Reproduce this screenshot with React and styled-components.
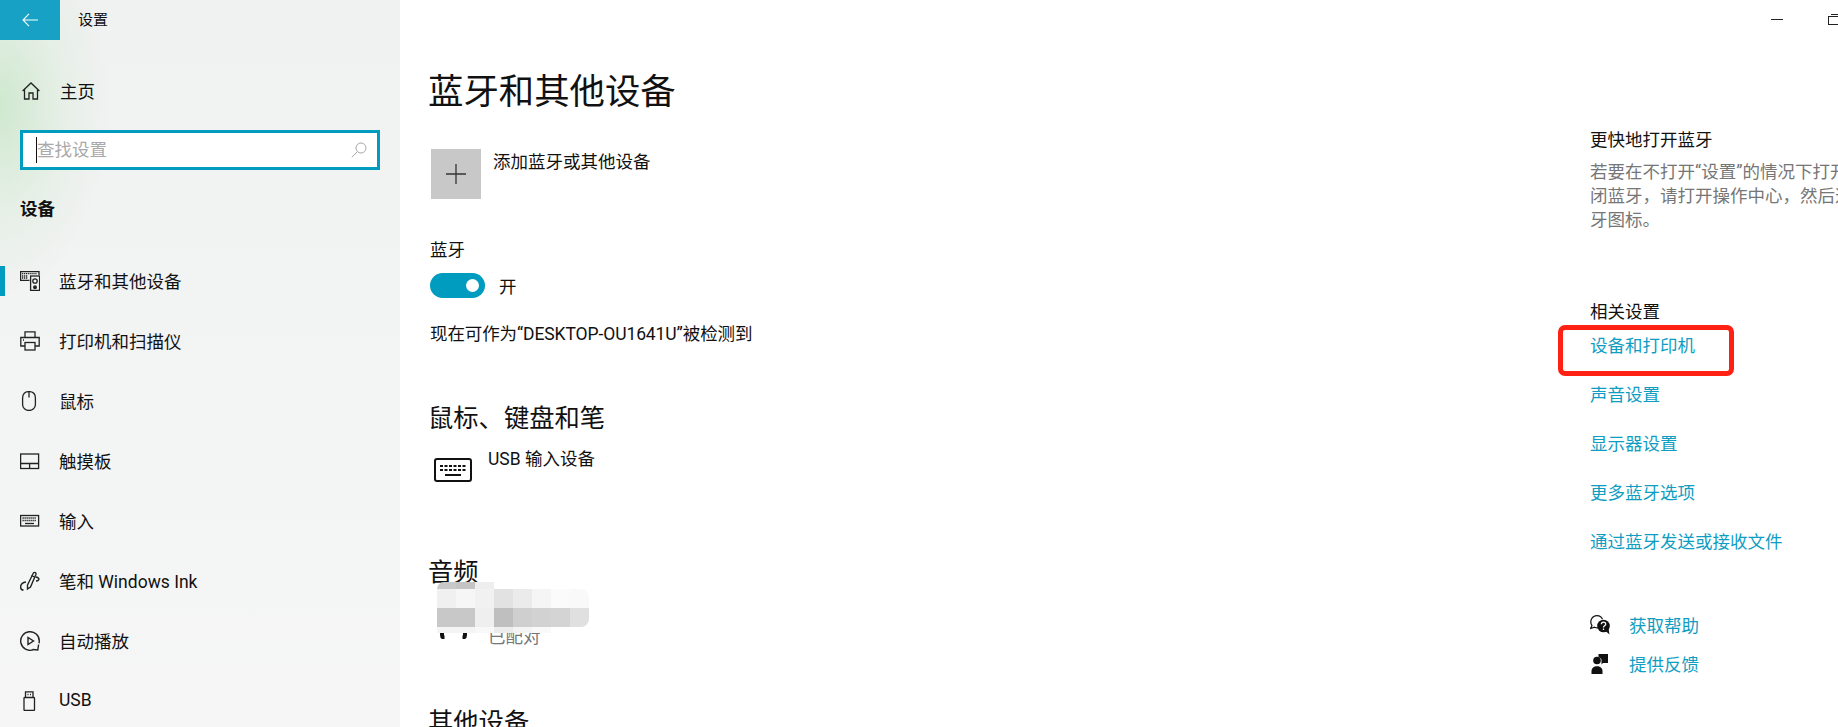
import React from "react";
import styled, { createGlobalStyle } from "styled-components";

const FONT = `Roboto, "Noto Sans CJK SC", sans-serif`;
const BLUE = "#009cc0";
const LINK = "#0f9dc2";

const GlobalStyle = createGlobalStyle`
  html, body {
    margin: 0;
    padding: 0;
    background: #fff;
    overflow: hidden;
  }
  body {
    font-family: ${FONT};
    font-size: 17.5px;
    color: #111;
  }
`;

const Window = styled.div`
  position: relative;
  display: flex;
  width: 1838px;
  height: 727px;
  overflow: hidden;
  background: #fff;
`;

const Sidebar = styled.nav`
  flex: 0 0 400px;
  display: flex;
  flex-direction: column;
  background:
    radial-gradient(ellipse 110px 190px at 0px 105px, #cfe8cf 0%, rgba(225, 238, 225, 0.7) 55%, rgba(242, 243, 243, 0) 100%),
    linear-gradient(180deg, #f0f1f1 0%, #f3f4f4 60%, #f6f6f6 100%);

  > * {
    flex-shrink: 0;
  }
`;

const TitleBar = styled.div`
  display: flex;
  align-items: center;
  height: 40px;
  font-size: 15px;
  line-height: 38px;
`;

const BackButton = styled.div`
  display: flex;
  align-items: center;
  justify-content: center;
  width: 60px;
  height: 40px;
  margin-right: 18px;
  background: #17a2c5;
`;

const HomeRow = styled.div`
  display: flex;
  align-items: center;
  height: 60px;
  margin-top: 21px;
  padding-left: 22px;
`;

const HomeLabel = styled.span`
  margin: -2px 0 0 20px;
`;

const SearchBox = styled.div`
  display: flex;
  align-items: center;
  justify-content: space-between;
  box-sizing: border-box;
  width: 360px;
  height: 40px;
  margin: 9px 0 0 20px;
  padding: 0 10px 0 13px;
  background: #fff;
  border: 3px solid ${BLUE};
  color: #a9a9a9;
`;

const Placeholder = styled.span`
  border-left: 1px solid #111;
  line-height: 26px;
`;

const GroupTitle = styled.div`
  height: 24px;
  line-height: 24px;
  margin: 27px 0 0 20px;
  font-weight: 700;
`;

const Menu = styled.div`
  display: flex;
  flex-direction: column;
  margin-top: 30px;
`;

const MenuRow = styled.div`
  display: flex;
  align-items: center;
  flex-shrink: 0;
  height: 60px;
  padding-left: 20px;
  position: relative;
`;

const ActiveBar = styled.span`
  position: absolute;
  left: 0;
  top: 15px;
  width: 5px;
  height: 30px;
  background: ${BLUE};
`;

const MenuIcon = styled.span`
  display: flex;
  align-items: center;
  justify-content: flex-start;
  width: 39px;
  height: 24px;
`;

const MenuLabel = styled.span`
  margin-top: -2px;
`;

const Content = styled.main`
  flex: 1;
  display: flex;
  flex-direction: column;
  padding-left: 30px;
  min-width: 0;

  > * {
    flex-shrink: 0;
  }
`;

const PageTitle = styled.h1`
  margin: 66px 0 0 -2px;
  font-size: 35.4px;
  font-weight: 400;
  line-height: 52px;
`;

const AddRow = styled.div`
  display: flex;
  align-items: flex-start;
  margin: 31px 0 0 1px;
`;

const AddTile = styled.div`
  display: flex;
  align-items: center;
  justify-content: center;
  width: 50px;
  height: 50px;
  margin-right: 12px;
  background: #c8c8c8;
`;

const AddLabel = styled.span`
  line-height: 27px;
`;

const FieldLabel = styled.div`
  margin-top: 37px;
  line-height: 28px;
`;

const ToggleRow = styled.div`
  display: flex;
  align-items: center;
  margin-top: 9px;
  height: 25px;
`;

const ToggleTrack = styled.span`
  display: flex;
  align-items: center;
  justify-content: flex-end;
  box-sizing: border-box;
  width: 55px;
  height: 25px;
  padding-right: 6px;
  border-radius: 13px;
  background: ${BLUE};
  margin-right: 14px;
`;

const ToggleThumb = styled.span`
  width: 13px;
  height: 13px;
  border-radius: 50%;
  background: #fff;
`;

const StatusLine = styled.div`
  margin-top: 22px;
  line-height: 28px;
  letter-spacing: -0.1px;
`;

const SectionTitle = styled.h2`
  margin: ${(p) => p.$top}px 0 0 -2px;
  font-size: 25.3px;
  font-weight: 400;
  line-height: 38px;
`;

const DeviceRow = styled.div`
  position: relative;
  display: flex;
  align-items: flex-start;
  margin: 6px 0 0 4px;
  height: ${(p) => p.$height}px;
`;

const DeviceIcon = styled.span`
  display: flex;
  width: 54px;
  padding-top: 14px;
`;

const DeviceName = styled.span`
  margin-top: 2px;
  line-height: 26px;
`;

const DeviceState = styled.span`
  color: #777;
  margin-top: 26px;
  line-height: 26px;
`;

const Mosaic = styled.div`
  position: absolute;
  left: 3px;
  top: -16px;
  display: grid;
  grid-template-columns: repeat(8, 19px);
  grid-template-rows: 7px 19px 19px 6px;
`;

const MosaicCell = styled.span`
  background: ${(p) => p.$c};
  border-radius: ${(p) => p.$r || 0};
`;

const Aside = styled.aside`
  flex: 0 0 248px;
  display: flex;
  flex-direction: column;
  overflow: hidden;
`;

const AsideTitle = styled.div`
  margin-top: ${(p) => p.$top}px;
  line-height: 28px;
`;

const Para = styled.p`
  width: 300px;
  margin: 6px 0 0;
  line-height: 24px;
  color: #767676;
`;

const LinkList = styled.div`
  display: flex;
  flex-direction: column;
  gap: 21px;
  margin-top: 6px;
`;

const Link = styled.a`
  color: ${LINK};
  line-height: 28px;
`;

const HelpRow = styled.div`
  display: flex;
  align-items: center;
  height: 28px;
  margin-top: ${(p) => p.$top}px;
`;

const HelpIcon = styled.span`
  display: flex;
  width: 39px;
  margin-top: ${(p) => p.$lift}px;
`;

const Controls = styled.div`
  position: absolute;
  top: 0;
  right: 0;
  display: flex;
  align-items: flex-start;
`;

const Minimize = styled.span`
  width: 12px;
  height: 1px;
  margin: 19px 45px 0 0;
  background: #222;
`;

const Restore = styled.span`
  position: relative;
  box-sizing: border-box;
  width: 10px;
  height: 9px;
  margin-top: 16px;
  border: 1px solid #222;
  border-right: none;

  &::before {
    content: "";
    position: absolute;
    left: 2px;
    top: -3px;
    width: 8px;
    height: 1px;
    background: #222;
  }
`;

const Highlight = styled.div`
  position: absolute;
  left: 1558px;
  top: 325px;
  box-sizing: border-box;
  width: 176px;
  height: 51px;
  border: 5px solid #ff2113;
  border-radius: 7px;
`;

const Stroke = ({ children, width = 1.3, color = "#222" }) => (
  <svg width={20} height={20} viewBox="0 0 20 20" fill="none" stroke={color} strokeWidth={width}>
    {children}
  </svg>
);

const icons = {
  devices: (
    <Stroke>
      <path d="M19 4V.6H.6v8.800H9.500" />
      <path d="M2 2.600h15M2 5h6M2 7h6" strokeDasharray="1.200 .7" />
      <rect x="10.600" y="5" width="9" height="14.400" />
      <circle cx="15" cy="10" r="2.200" />
      <circle cx="15" cy="16.200" r="1.300" fill="#222" />
    </Stroke>
  ),
  printer: (
    <Stroke>
      <path d="M5 6.500V.8h10v5.700" />
      <path d="M5 15H.8V6.500h18.400V15H15" />
      <rect x="5" y="11.500" width="10" height="7.500" />
      <path d="M3 9h1" />
    </Stroke>
  ),
  mouse: (
    <Stroke>
      <path d="M2.600 7c0-4 2.400-6.400 6.400-6.400S15.400 3 15.400 7v6.500c0 3.500-2.800 6-6.400 6s-6.400-2.500-6.400-6z" />
      <path d="M9 .6v6" />
    </Stroke>
  ),
  pad: (
    <Stroke>
      <rect x=".6" y="3" width="18" height="14.500" />
      <path d="M.6 12.500h18M9.600 12.500v5" />
    </Stroke>
  ),
  keys: (
    <Stroke>
      <rect x=".6" y="4.500" width="18" height="10.500" />
      <path d="M2.500 7h14M2.500 9.500h14" strokeDasharray="1.300 .7" />
      <path d="M5 12.500h9" />
    </Stroke>
  ),
  pen: (
    <Stroke width={1.4}>
      <path d="M7.500 14 13.500 1.800c1-1 3 0 2.500 1.500L10.500 16l-3 2z" />
      <path d="M11.500 4.500l3.800 2" />
      <path d="M16 6c2.500.5 3.500 1.800 2.500 3-.5.6-1.500 1-2.500 1M6 11c-3 .5-5.400 2.500-5.400 5 0 2 1 3 2.900 3" />
    </Stroke>
  ),
  play: (
    <Stroke width={1.4}>
      <path d="M13 18.800A9.300 9.300 0 1 1 19.300 10c0 .8-.1 1.500-.3 2.200" />
      <path d="M8 6.500v7l5.500-3.500z" />
      <path d="M18.600 13.500 17.800 19 12.500 18.500" />
    </Stroke>
  ),
  usb: (
    <Stroke>
      <rect x="4" y="6.500" width="10.500" height="13" rx=".8" />
      <path d="M5.500 6.500V.8h7.500v5.700" />
      <path d="M7.500 3.500h1M10 3.500h1" />
    </Stroke>
  ),
};

const menu = [
  ["devices", "蓝牙和其他设备"],
  ["printer", "打印机和扫描仪"],
  ["mouse", "鼠标"],
  ["pad", "触摸板"],
  ["keys", "输入"],
  ["pen", "笔和 Windows Ink"],
  ["play", "自动播放"],
  ["usb", "USB"],
];

const links = ["设备和打印机", "声音设置", "显示器设置", "更多蓝牙选项", "通过蓝牙发送或接收文件"];

// the blurred-out device name, row by row
const mosaic = [
  ["#c9c9c9", "8px 0 0 0"], ["#c4c4c4"], ["#eeeeee"], ["transparent"], ["transparent"], ["transparent"], ["transparent"], ["transparent"],
  ["#f0f0f0"], ["#f6f6f6"], ["#f1f1f1"], ["#e2e2e2"], ["#ebebeb"], ["#f5f5f5"], ["#fbfbfb"], ["#f9f9f9", "0 8px 0 0"],
  ["#c8c8c8"], ["#c8c8c8"], ["#efefef"], ["#bfbfbf"], ["#cfcfcf"], ["#d2d2d2"], ["#d4d4d4"], ["#e0e0e0", "0 0 8px 0"],
  ["#f4f4f4"], ["#f4f4f4"], ["#f8f8f8"], ["#ececec"], ["#f4f4f4"], ["#f9f9f9"], ["transparent"], ["transparent"],
];

export default function App() {
  return (
    <>
      <GlobalStyle />
      <Window>
        <Sidebar>
          <TitleBar>
            <BackButton>
              <svg width="16" height="14" viewBox="0 0 16 14" fill="none" stroke="#fff" strokeWidth="1.100">
                <path d="M7 .8 1 7l6 6.200M1 7h15" />
              </svg>
            </BackButton>
            设置
          </TitleBar>
          <HomeRow>
            <svg width="18" height="18" viewBox="0 0 18 18" fill="none" stroke="#222" strokeWidth="1.300">
              <path d="M.6 9 9 1l8.400 8M2.500 7.500v9.500h4.500v-6h4v6h4.500V7.500" />
            </svg>
            <HomeLabel>主页</HomeLabel>
          </HomeRow>
          <SearchBox>
            <Placeholder>查找设置</Placeholder>
            <svg width="16" height="16" viewBox="0 0 16 16" fill="none" stroke="#a9a9a9" strokeWidth="1">
              <circle cx="10" cy="6" r="5" />
              <path d="M6.500 9.500.8 15.200" />
            </svg>
          </SearchBox>
          <GroupTitle>设备</GroupTitle>
          <Menu>
            {menu.map(([icon, label], i) => (
              <MenuRow key={label}>
                {i === 0 && <ActiveBar />}
                <MenuIcon>{icons[icon]}</MenuIcon>
                <MenuLabel>{label}</MenuLabel>
              </MenuRow>
            ))}
          </Menu>
        </Sidebar>

        <Content>
          <PageTitle>蓝牙和其他设备</PageTitle>
          <AddRow>
            <AddTile>
              <svg width="20" height="20" viewBox="0 0 20 20" stroke="#333" strokeWidth="1.300">
                <path d="M10 0v20M0 10h20" />
              </svg>
            </AddTile>
            <AddLabel>添加蓝牙或其他设备</AddLabel>
          </AddRow>
          <FieldLabel>蓝牙</FieldLabel>
          <ToggleRow>
            <ToggleTrack>
              <ToggleThumb />
            </ToggleTrack>
            开
          </ToggleRow>
          <StatusLine>现在可作为“DESKTOP-OU1641U”被检测到</StatusLine>
          <SectionTitle $top={52}>鼠标、键盘和笔</SectionTitle>
          <DeviceRow $height={52}>
            <DeviceIcon>
              <svg width="38" height="24" viewBox="0 0 38 24" fill="none" stroke="#111">
                <rect x="1" y="1" width="36" height="22" rx="2" strokeWidth="2" />
                <path d="M6 8h26M6 12h26" strokeWidth="2" strokeDasharray="3 1.500" />
                <path d="M11 17h16" strokeWidth="2" />
              </svg>
            </DeviceIcon>
            <DeviceName>USB 输入设备</DeviceName>
          </DeviceRow>
          <SectionTitle $top={58}>音频</SectionTitle>
          <DeviceRow $height={90}>
            <DeviceIcon>
              <svg width="38" height="27" viewBox="0 0 38 27" fill="none" stroke="#111" strokeWidth="4">
                <path d="M8 15v8c0 1.500 1 2.500 2.500 2.500M31 15v8c0 1.500-1 2.500-2.500 2.500" />
              </svg>
            </DeviceIcon>
            <DeviceState>已配对</DeviceState>
            <Mosaic>
              {mosaic.map(([c, r], i) => (
                <MosaicCell key={i} $c={c} $r={r} />
              ))}
            </Mosaic>
          </DeviceRow>
          <SectionTitle $top={16}>其他设备</SectionTitle>
        </Content>

        <Aside>
          <AsideTitle $top={126}>更快地打开蓝牙</AsideTitle>
          <Para>若要在不打开“设置”的情况下打开或关闭蓝牙，请打开操作中心，然后选择蓝牙图标。</Para>
          <AsideTitle $top={66}>相关设置</AsideTitle>
          <LinkList>
            {links.map((l) => (
              <Link key={l}>{l}</Link>
            ))}
          </LinkList>
          <HelpRow $top={56}>
            <HelpIcon $lift={-3}>
              <svg width="20" height="20" viewBox="0 0 20 20">
                <path d="M7 .7a6.200 6.200 0 0 0-5 9.800L.6 13.500l4-1.300a6 6 0 0 0 4 .5" fill="#fff" stroke="#111" strokeWidth="1.200" />
                <path d="M7 .7a6 6 0 0 1 5.500 3.500" fill="none" stroke="#111" strokeWidth="1.200" />
                <circle cx="13.500" cy="11" r="6.300" fill="#111" />
                <path d="M15.500 16l4 3.500-1-6z" fill="#111" />
                <path d="M11.400 9.300c0-2.800 4.300-2.800 4.300 0 0 1.500-2.200 1.500-2.200 3.200M13.500 13.500v1.600" fill="none" stroke="#fff" strokeWidth="1.300" />
              </svg>
            </HelpIcon>
            <Link>获取帮助</Link>
          </HelpRow>
          <HelpRow $top={11}>
            <HelpIcon $lift={-3}>
              <svg width="20" height="20" viewBox="0 0 20 20" fill="#111">
                <circle cx="7" cy="6.500" r="3.800" />
                <path d="M1.500 20v-3c0-3 2.500-4.800 5.500-4.800s5.500 1.800 5.500 4.800v3z" />
                <path d="M8.500 0H18v9h-5l-1.500 1.500V5.500a4.500 4.500 0 0 0-3-2.500z" />
              </svg>
            </HelpIcon>
            <Link>提供反馈</Link>
          </HelpRow>
        </Aside>

        <Controls>
          <Minimize />
          <Restore />
        </Controls>
        <Highlight />
      </Window>
    </>
  );
}
